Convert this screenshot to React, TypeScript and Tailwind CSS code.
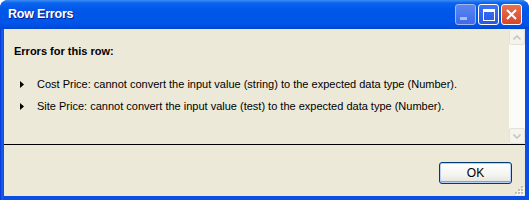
import React from 'react';

const ERRORS = [
  'Cost Price: cannot convert the input value (string) to the expected data type (Number).',
  'Site Price: cannot convert the input value (test) to the expected data type (Number).',
];

function Bullet() {
  return (
    <svg width="4" height="7" viewBox="0 0 4 7" className="shrink-0">
      <path d="M0 0 L4 3.5 L0 7 Z" fill="#000" />
    </svg>
  );
}

function ScrollArrow({ dir }: { dir: 'up' | 'down' }) {
  return (
    <div className="flex h-[16px] w-[16px] items-center justify-center rounded-[2px] border border-[#E4E2D6] bg-[#F4F3EE]">
      <svg width="8" height="5" viewBox="0 0 8 5">
        <path
          d={dir === 'up' ? 'M0.5 4.5 L4 1 L7.5 4.5' : 'M0.5 0.5 L4 4 L7.5 0.5'}
          stroke="#C9C7BA"
          strokeWidth="1.6"
          fill="none"
        />
      </svg>
    </div>
  );
}

export default function App() {
  return (
    <div className="flex h-[200px] w-[529px] flex-col rounded-t-[8px] bg-[linear-gradient(to_right,#0831D9,#1660E8_2px,#0A4EE3_4px)] font-['Liberation_Sans',Arial,sans-serif] text-black">
      {/* title bar */}
      <div className="flex h-[29px] items-center rounded-t-[8px] bg-[linear-gradient(to_bottom,#3C8EF3_0px,#0A63EF_3px,#0157E8_10px,#0055EA_22px,#0050E2_26px,#0145C8_29px)] pl-[8px] pr-[7px]">
        <span className="text-[12.5px] font-bold tracking-[-0.2px] text-white [text-shadow:1px_1px_0_#0A1E8C]">
          Row Errors
        </span>
        <div className="ml-auto flex gap-[2px]">
          <div className="flex h-[21px] w-[21px] items-end justify-start rounded-[3px] border border-[#9FB6F2] bg-[linear-gradient(to_bottom,#5C86F0,#3E6BE8)] pb-[4px] pl-[4px]">
            <div className="h-[3px] w-[7px] bg-[#A9BDF4]" />
          </div>
          <div className="flex h-[21px] w-[21px] items-center justify-center rounded-[3px] border border-white bg-[linear-gradient(to_bottom,#3E73F5,#2558E6)]">
            <div className="h-[12px] w-[12px] border border-t-[3px] border-white" />
          </div>
          <div className="flex h-[21px] w-[21px] items-center justify-center rounded-[3px] border border-white bg-[linear-gradient(to_bottom,#E8714F,#D6472A)]">
            <svg width="11" height="11" viewBox="0 0 11 11">
              <path d="M1 1 L10 10 M10 1 L1 10" stroke="#fff" strokeWidth="2" />
            </svg>
          </div>
        </div>
      </div>

      {/* body */}
      <div className="relative mx-[4px] mb-[4px] flex flex-1 flex-col bg-[#ECE9D8]">
        <div className="flex h-[115px]">
          <div className="flex-1 pl-[10px] pt-[16px] text-[11px] leading-[13px]">
            <p className="font-bold">Errors for this row:</p>
            <ul className="mt-[20px] flex flex-col gap-[9px]">
              {ERRORS.map((err) => (
                <li key={err} className="flex items-center gap-[13px] pl-[6px]">
                  <Bullet />
                  <span>{err}</span>
                </li>
              ))}
            </ul>
          </div>
          <div className="flex w-[16px] flex-col justify-between bg-[#FBFBF8]">
            <ScrollArrow dir="up" />
            <ScrollArrow dir="down" />
          </div>
        </div>
        <div className="h-[1px] bg-black" />
        <div className="flex flex-1 justify-end pr-[13px] pt-[17px]">
          <button
            type="button"
            className="h-[22px] w-[73px] rounded-[3px] border border-[#003C74] bg-[linear-gradient(to_bottom,#FFFFFF,#F4F4F0_60%,#E3E2DA)] text-[12px] text-black shadow-[inset_0_0_0_1px_#B8D0F5,inset_0_-1px_0_1px_#7EA2E8]"
          >
            OK
          </button>
        </div>
        {/* resize grip */}
        <svg width="10" height="10" viewBox="0 0 10 10" className="absolute bottom-[1px] right-[1px]">
          {[
            [7, 1],
            [4, 4],
            [7, 4],
            [1, 7],
            [4, 7],
            [7, 7],
          ].map(([x, y]) => (
            <g key={`${x}-${y}`}>
              <rect x={x + 1} y={y + 1} width="2" height="2" fill="#FFFFFF" />
              <rect x={x} y={y} width="2" height="2" fill="#C2BFB0" />
            </g>
          ))}
        </svg>
      </div>
    </div>
  );
}
